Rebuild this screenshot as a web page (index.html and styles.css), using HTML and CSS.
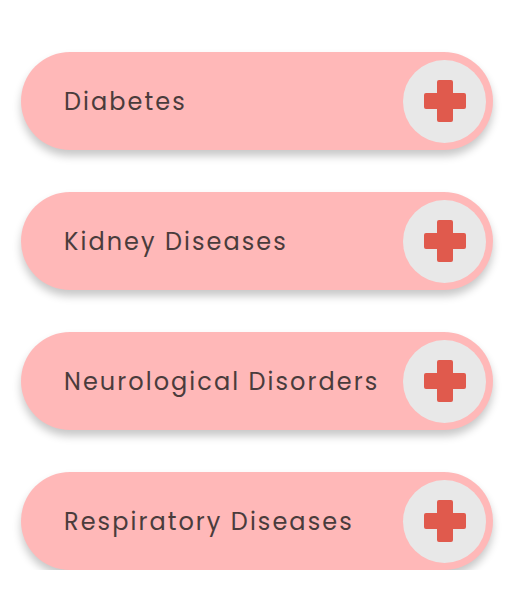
FILE: index.html
```html
<!DOCTYPE html>
<html>
<head>
<meta charset="utf-8">
<link rel="stylesheet" href="styles.css">
</head>
<body>
<div class="list">
  <div class="pill"><span class="label">Diabetes</span><span class="btn"><svg width="42" height="42" viewBox="0 0 42 42"><path class="cross" d="M13 2 a2 2 0 0 1 2 -2 h12 a2 2 0 0 1 2 2 v11 h11 a2 2 0 0 1 2 2 v12 a2 2 0 0 1 -2 2 h-11 v11 a2 2 0 0 1 -2 2 h-12 a2 2 0 0 1 -2 -2 v-11 h-11 a2 2 0 0 1 -2 -2 v-12 a2 2 0 0 1 2 -2 h11 z"/></svg></span></div>
  <div class="pill"><span class="label">Kidney Diseases</span><span class="btn"><svg width="42" height="42" viewBox="0 0 42 42"><path class="cross" d="M13 2 a2 2 0 0 1 2 -2 h12 a2 2 0 0 1 2 2 v11 h11 a2 2 0 0 1 2 2 v12 a2 2 0 0 1 -2 2 h-11 v11 a2 2 0 0 1 -2 2 h-12 a2 2 0 0 1 -2 -2 v-11 h-11 a2 2 0 0 1 -2 -2 v-12 a2 2 0 0 1 2 -2 h11 z"/></svg></span></div>
  <div class="pill"><span class="label">Neurological Disorders</span><span class="btn"><svg width="42" height="42" viewBox="0 0 42 42"><path class="cross" d="M13 2 a2 2 0 0 1 2 -2 h12 a2 2 0 0 1 2 2 v11 h11 a2 2 0 0 1 2 2 v12 a2 2 0 0 1 -2 2 h-11 v11 a2 2 0 0 1 -2 2 h-12 a2 2 0 0 1 -2 -2 v-11 h-11 a2 2 0 0 1 -2 -2 v-12 a2 2 0 0 1 2 -2 h11 z"/></svg></span></div>
  <div class="pill"><span class="label">Respiratory Diseases</span><span class="btn"><svg width="42" height="42" viewBox="0 0 42 42"><path class="cross" d="M13 2 a2 2 0 0 1 2 -2 h12 a2 2 0 0 1 2 2 v11 h11 a2 2 0 0 1 2 2 v12 a2 2 0 0 1 -2 2 h-11 v11 a2 2 0 0 1 -2 2 h-12 a2 2 0 0 1 -2 -2 v-11 h-11 a2 2 0 0 1 -2 -2 v-12 a2 2 0 0 1 2 -2 h11 z"/></svg></span></div>
</div>
</body>
</html>
```
FILE: styles.css
```css
html, body {
  margin: 0;
  padding: 0;
  background: #ffffff;
}
.list {
  display: flex;
  flex-direction: column;
  gap: 42px;
  padding: 52px 0 0 21px;
}
.pill {
  box-sizing: border-box;
  width: 472px;
  height: 98px;
  border-radius: 49px;
  background: #ffb8b8;
  display: flex;
  align-items: center;
  justify-content: space-between;
  padding: 0 7px 0 43px;
  box-shadow: 0 6px 8px rgba(0, 0, 0, 0.22);
}
.label {
  font-family: "Poppins", "Lato", "Noto Sans", sans-serif;
  font-size: 24px;
  letter-spacing: 2.05px;
  color: #4a3c3c;
}
.btn {
  width: 83px;
  height: 83px;
  border-radius: 50%;
  background: #e8e8e8;
  display: flex;
  align-items: center;
  justify-content: center;
}
.cross {
  fill: #e05a4d;
}
```
